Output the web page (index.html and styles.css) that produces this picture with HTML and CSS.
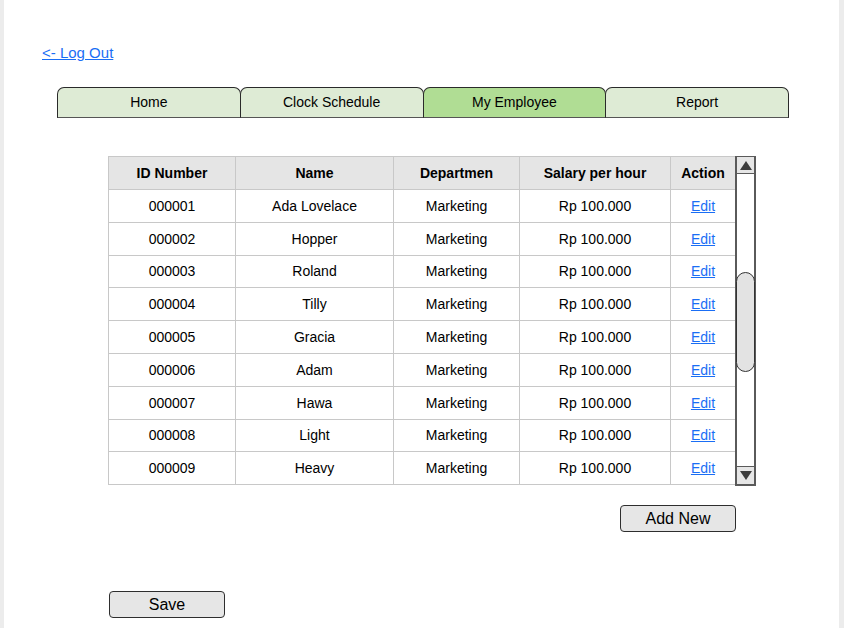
FILE: index.html
```html
<!DOCTYPE html>
<html>
<head>
<meta charset="utf-8">
<link rel="stylesheet" href="styles.css">
</head>
<body>
<div class="page">
  <a class="logout" href="#">&lt;- Log Out</a>
  <nav class="tabs">
    <div class="tab">Home</div>
    <div class="tab">Clock Schedule</div>
    <div class="tab active">My Employee</div>
    <div class="tab">Report</div>
  </nav>
  <div class="content">
    <div class="grid-wrap">
      <table class="grid">
        <colgroup>
          <col class="c1"><col class="c2"><col class="c3"><col class="c4"><col class="c5">
        </colgroup>
        <thead>
          <tr><th>ID Number</th><th>Name</th><th>Departmen</th><th>Salary per hour</th><th>Action</th></tr>
        </thead>
        <tbody>
          <tr><td>000001</td><td>Ada Lovelace</td><td>Marketing</td><td>Rp 100.000</td><td><a href="#">Edit</a></td></tr>
          <tr><td>000002</td><td>Hopper</td><td>Marketing</td><td>Rp 100.000</td><td><a href="#">Edit</a></td></tr>
          <tr><td>000003</td><td>Roland</td><td>Marketing</td><td>Rp 100.000</td><td><a href="#">Edit</a></td></tr>
          <tr><td>000004</td><td>Tilly</td><td>Marketing</td><td>Rp 100.000</td><td><a href="#">Edit</a></td></tr>
          <tr><td>000005</td><td>Gracia</td><td>Marketing</td><td>Rp 100.000</td><td><a href="#">Edit</a></td></tr>
          <tr><td>000006</td><td>Adam</td><td>Marketing</td><td>Rp 100.000</td><td><a href="#">Edit</a></td></tr>
          <tr><td>000007</td><td>Hawa</td><td>Marketing</td><td>Rp 100.000</td><td><a href="#">Edit</a></td></tr>
          <tr><td>000008</td><td>Light</td><td>Marketing</td><td>Rp 100.000</td><td><a href="#">Edit</a></td></tr>
          <tr><td>000009</td><td>Heavy</td><td>Marketing</td><td>Rp 100.000</td><td><a href="#">Edit</a></td></tr>
        </tbody>
      </table>
      <div class="scrollbar">
        <div class="sb-btn up"><span class="tri-up"></span></div>
        <div class="sb-track">
          <div class="sb-thumb"></div>
        </div>
        <div class="sb-btn down"><span class="tri-down"></span></div>
      </div>
    </div>
    <div class="actions">
      <button class="btn">Add New</button>
    </div>
    <div class="save-row">
      <button class="btn">Save</button>
    </div>
  </div>
</div>
</body>
</html>
```

FILE: styles.css
```css
html, body {
  margin: 0;
  padding: 0;
}
body {
  background: #ececec;
  font-family: "Liberation Sans", Arial, sans-serif;
  font-size: 14px;
  color: #000;
}
.page {
  margin-left: 4px;
  width: 835px;
  height: 628px;
  background: #fff;
  box-sizing: border-box;
  padding: 44px 0 0 38px;
  display: flex;
  flex-direction: column;
  align-items: flex-start;
  overflow: hidden;
}
.logout {
  color: #1a6ef5;
  text-decoration: underline;
  font-size: 15px;
  line-height: 17px;
}
.tabs {
  display: flex;
  margin: 26px 0 0 15px;
}
.tab {
  width: 183.75px;
  height: 31px;
  box-sizing: border-box;
  background: #deebd5;
  border: 1px solid #2a2a2a;
  border-bottom: 1px solid #555;
  border-radius: 7px 7px 0 0;
  display: flex;
  align-items: center;
  justify-content: center;
  padding-bottom: 1px;
  font-size: 14px;
  margin-left: -1px;
}
.tab:first-child {
  margin-left: 0;
}
.tab.active {
  background: #b0dd94;
}
.content {
  margin: 38px 0 0 66px;
  display: flex;
  flex-direction: column;
}
.grid-wrap {
  display: flex;
  align-items: flex-start;
}
.grid {
  border-collapse: collapse;
  width: 627px;
  table-layout: fixed;
}
.c1 { width: 127px; }
.c2 { width: 158px; }
.c3 { width: 126px; }
.c4 { width: 151px; }
.c5 { width: 65px; }
.grid th, .grid td {
  border: 1px solid #c8c8c8;
  text-align: center;
  padding: 0;
  font-size: 14px;
  white-space: nowrap;
  overflow: hidden;
}
.grid th {
  background: #e5e5e5;
  font-weight: bold;
  height: 32px;
}
.grid td {
  height: 31.8px;
}
.grid td a {
  color: #1a6ef5;
  text-decoration: underline;
}
.scrollbar {
  width: 21px;
  height: 330px;
  box-sizing: border-box;
  border: 2px solid #5a5a5a;
  border-top-width: 1px;
  display: flex;
  flex-direction: column;
  background: #fff;
  margin-left: -1px;
}
.sb-btn {
  height: 16px;
  background: #e6e6e6;
  display: flex;
  align-items: center;
  justify-content: center;
}
.sb-btn.up {
  border-bottom: 1px solid #5a5a5a;
}
.sb-btn.down {
  border-top: 1px solid #5a5a5a;
  height: 17px;
}
.tri-up {
  width: 0;
  height: 0;
  border-left: 6px solid transparent;
  border-right: 6px solid transparent;
  border-bottom: 9px solid #3c3c3c;
}
.tri-down {
  width: 0;
  height: 0;
  border-left: 6px solid transparent;
  border-right: 6px solid transparent;
  border-top: 9px solid #3c3c3c;
}
.sb-track {
  flex: 1;
  display: flex;
  flex-direction: column;
  padding-top: 98px;
}
.sb-thumb {
  height: 98px;
  margin: 0 -1px;
  background: #e3e3e3;
  border: 1px solid #333;
  border-radius: 10px;
}
.actions {
  display: flex;
  justify-content: flex-end;
  width: 628px;
  margin-top: 19px;
}
.btn {
  width: 116px;
  height: 27px;
  box-sizing: border-box;
  background: #e6e6e6;
  border: 1px solid #2e2e2e;
  border-radius: 4px;
  font-family: "Liberation Sans", Arial, sans-serif;
  font-size: 16px;
  color: #000;
  padding: 0;
  line-height: 24px;
}
.save-row {
  margin-top: 59px;
  margin-left: 1px;
}
```
